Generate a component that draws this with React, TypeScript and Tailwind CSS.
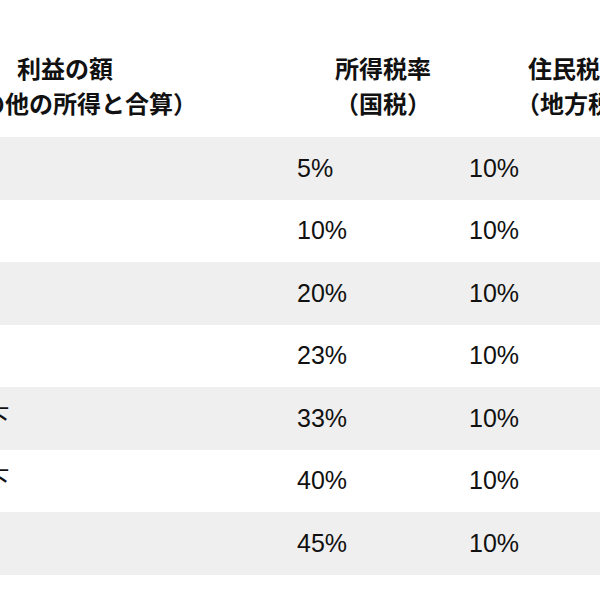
import React from 'react'

const rows = [
  { income: '195万円以下', rate: '5%', local: '10%' },
  { income: '330万円以下', rate: '10%', local: '10%' },
  { income: '695万円以下', rate: '20%', local: '10%' },
  { income: '900万円以下', rate: '23%', local: '10%' },
  { income: '1,800万円以下', rate: '33%', local: '10%' },
  { income: '4,000万円以下', rate: '40%', local: '10%' },
  { income: '4,000万円超', rate: '45%', local: '10%' },
]

export default function App() {
  return (
    <div
      className="w-[600px] h-[600px] overflow-hidden bg-white text-[#111]"
      style={{ fontFamily: '"Liberation Sans", "Noto Sans CJK JP", sans-serif' }}
    >
      {/* 表は左右がはみ出している */}
      <div className="-ml-[167px] w-[850px]">
        <div className="grid grid-cols-[464px_172px_214px] h-[137px] items-end pb-[15px] text-[24px] font-bold leading-[35px]">
          <div className="text-center">
            利益の額
            <br />
            （その他の所得と合算）
          </div>
          <div className="text-center">
            所得税率
            <br />
            （国税）
          </div>
          <div className="text-center">
            住民税率
            <br />
            （地方税）
          </div>
        </div>

        {rows.map((row, i) => (
          <div
            key={i}
            className={
              'grid grid-cols-[464px_172px_214px] h-[62.5px] items-center text-[25px] ' +
              (i % 2 === 0 ? 'bg-[#efefef]' : 'bg-white')
            }
          >
            <div className="pl-[14px]">{row.income}</div>
            <div>{row.rate}</div>
            <div>{row.local}</div>
          </div>
        ))}
      </div>
    </div>
  )
}
